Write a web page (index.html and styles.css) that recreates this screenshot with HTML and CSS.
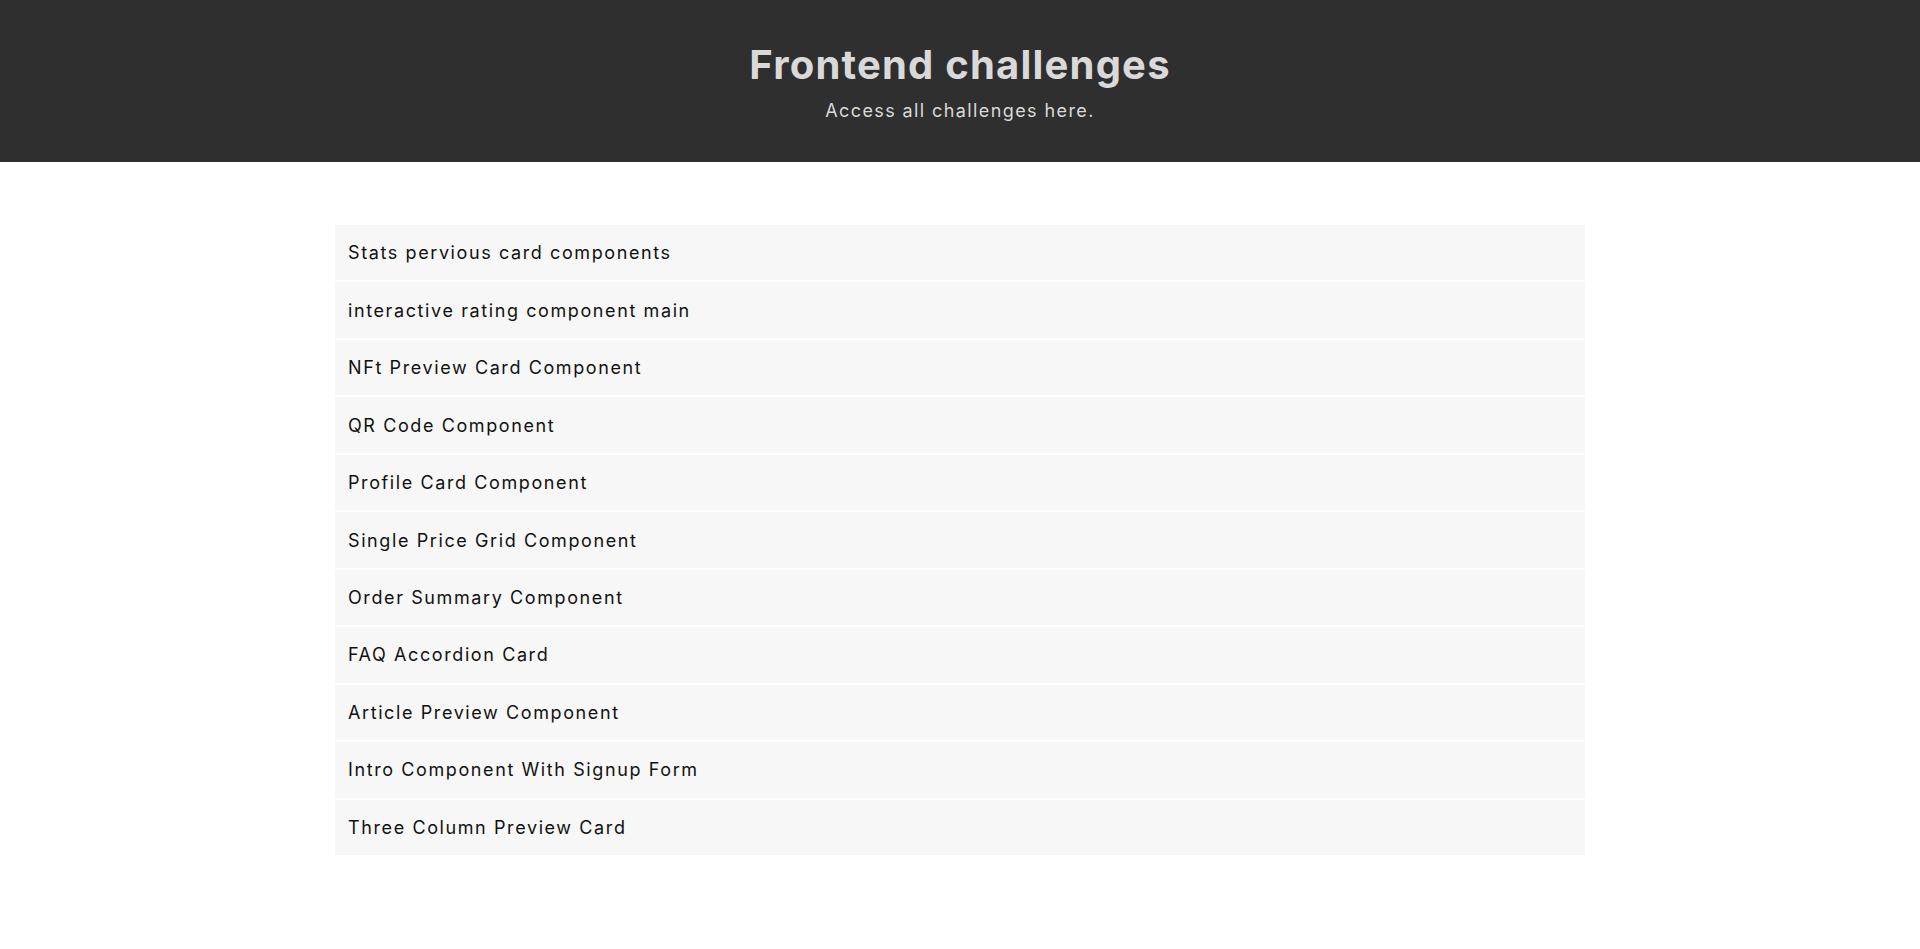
FILE: index.html
```html
<!DOCTYPE html>
<html lang="en">
<head>
<meta charset="utf-8">
<title>Frontend challenges</title>
<link rel="stylesheet" href="styles.css">
</head>
<body>
<header class="hero">
  <h1 class="hero-title">Frontend challenges</h1>
  <p class="hero-sub">Access all challenges here.</p>
</header>
<main class="content">
  <ul class="list">
    <li class="item">Stats pervious card components</li>
    <li class="item">interactive rating component main</li>
    <li class="item">NFt Preview Card Component</li>
    <li class="item">QR Code Component</li>
    <li class="item">Profile Card Component</li>
    <li class="item">Single Price Grid Component</li>
    <li class="item">Order Summary Component</li>
    <li class="item">FAQ Accordion Card</li>
    <li class="item">Article Preview Component</li>
    <li class="item">Intro Component With Signup Form</li>
    <li class="item">Three Column Preview Card</li>
  </ul>
</main>
</body>
</html>
```
FILE: styles.css
```css
* { box-sizing: border-box; }
html, body { margin: 0; padding: 0; }
body {
  font-family: "Inter", "Open Sans", sans-serif;
  background: #ffffff;
  color: #111111;
}
.hero {
  background: #2f2f2f;
  color: #d9d9d9;
  text-align: center;
  height: 162px;
  padding-top: 41px;
}
.hero-title {
  margin: 0;
  font-size: 40px;
  line-height: 48px;
  font-weight: 700;
  letter-spacing: 1.2px;
}
.hero-sub {
  margin: 8px 0 0;
  font-size: 18px;
  line-height: 27px;
  font-weight: 400;
  letter-spacing: 1.4px;
}
.content {
  padding-top: 63px;
}
.list {
  list-style: none;
  margin: 0 auto;
  padding: 0;
  width: 1250px;
  display: flex;
  flex-direction: column;
  gap: 2.3px;
}
.item {
  background: #f7f7f7;
  height: 55.2px;
  padding: 0 13px;
  display: flex;
  align-items: center;
  font-size: 18px;
  line-height: 27px;
  letter-spacing: 1.6px;
}
```
